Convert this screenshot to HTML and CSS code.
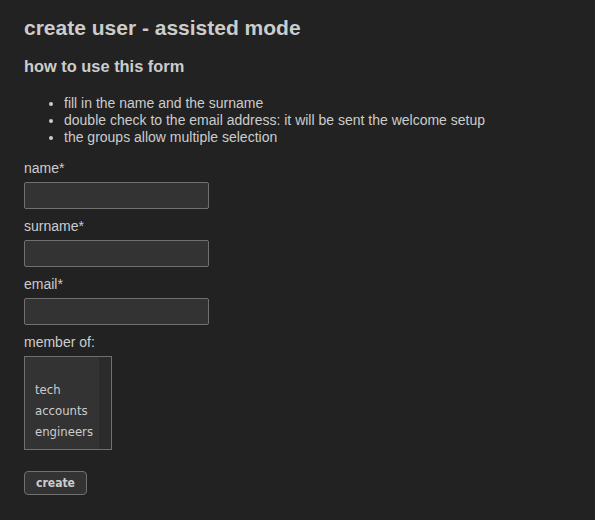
FILE: index.html
```html
<!DOCTYPE html>
<html>
<head>
<meta charset="utf-8">
<link rel="stylesheet" href="styles.css">
</head>
<body>
<main class="page">
  <h1 class="title">create user - assisted mode</h1>
  <h2 class="subtitle">how to use this form</h2>
  <ul class="tips">
    <li>fill in the name and the surname</li>
    <li>double check to the email address: it will be sent the welcome setup</li>
    <li>the groups allow multiple selection</li>
  </ul>
  <form class="form">
    <div class="field">
      <label class="label">name*</label>
      <div class="input"></div>
    </div>
    <div class="field">
      <label class="label">surname*</label>
      <div class="input"></div>
    </div>
    <div class="field">
      <label class="label">email*</label>
      <div class="input"></div>
    </div>
    <div class="field">
      <label class="label">member of:</label>
      <div class="listbox">
        <div class="options">
          <div class="group"></div>
          <div class="option">tech</div>
          <div class="option">accounts</div>
          <div class="option">engineers</div>
        </div>
        <div class="gutter"></div>
      </div>
    </div>
    <div class="actions">
      <div class="button">create</div>
    </div>
  </form>
</main>
</body>
</html>
```
FILE: styles.css
```css
html, body {
  margin: 0;
  padding: 0;
  background: #222222;
}
.page {
  padding: 13px 24px;
  color: #cccccc;
  font-family: "Liberation Sans", Arial, sans-serif;
  font-size: 14px;
  line-height: 17px;
}
.title {
  margin: 0;
  font-size: 21px;
  line-height: 30px;
  font-weight: bold;
}
.subtitle {
  margin: 11px 0 0;
  font-size: 16.4px;
  line-height: 24px;
  font-weight: bold;
}
.tips {
  margin: 17px 0 0;
  padding-left: 40px;
}
.form {
  margin-top: 14px;
  display: flex;
  flex-direction: column;
  gap: 9px;
}
.field {
  display: flex;
  flex-direction: column;
  align-items: flex-start;
  gap: 5px;
}
.input {
  width: 183px;
  height: 25px;
  border: 1px solid #707070;
  border-radius: 2px;
  background: #333333;
}
.listbox {
  display: flex;
  width: 86px;
  height: 92px;
  border: 1px solid #707070;
  background: #333333;
  font-family: "DejaVu Sans Condensed", "DejaVu Sans", sans-serif;
  font-size: 13px;
  line-height: 21px;
}
.options {
  flex: 1;
  padding-top: 1px;
}
.group {
  height: 21px;
}
.option {
  padding-left: 10px;
  white-space: nowrap;
}
.gutter {
  width: 12px;
  background: #2b2b2b;
}
.actions {
  margin-top: 12px;
  display: flex;
}
.button {
  width: 61px;
  height: 21px;
  padding-top: 1px;
  border: 1px solid #707070;
  border-radius: 4px;
  background: #333333;
  font-family: "DejaVu Sans Condensed", "DejaVu Sans", sans-serif;
  font-size: 12px;
  font-weight: bold;
  line-height: 21px;
  text-align: center;
}
```
